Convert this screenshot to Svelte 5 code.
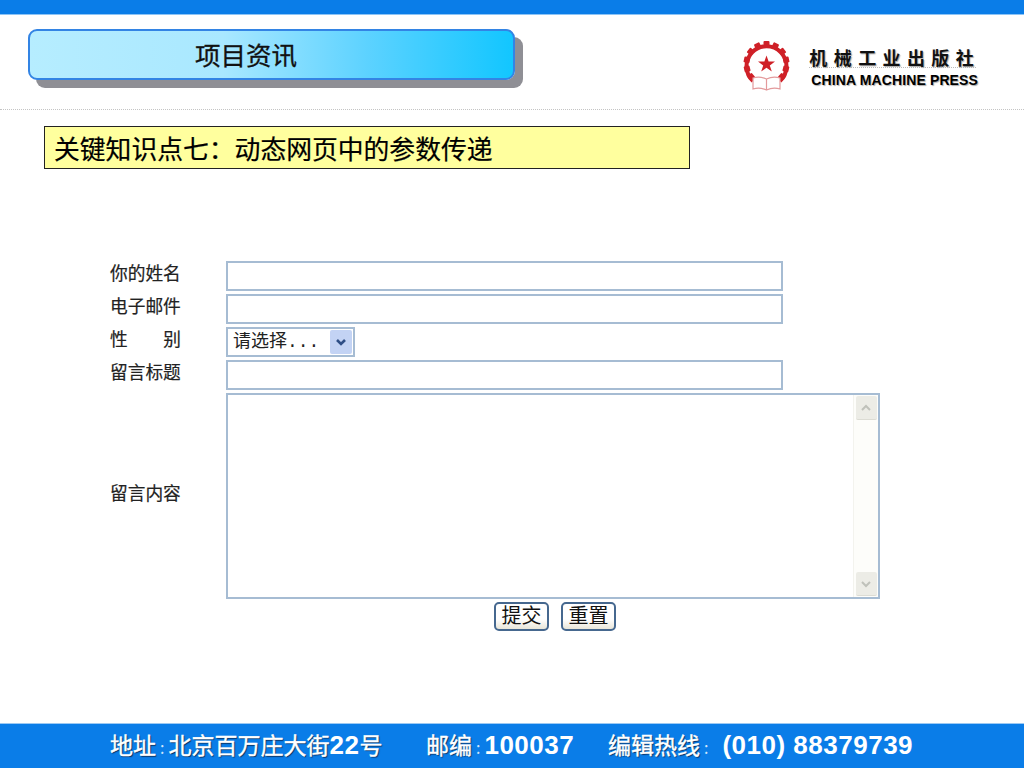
<script>
  const labels = { name: '你的姓名', mail: '电子邮件', sex: '留言标题', body: '留言内容' };
  // teeth of the logo gear, open at the bottom where the book sits
  const teeth = [];
  for (let a = -130; a <= 130; a += 26) teeth.push(a);
</script>

<div class="page">
  <div class="topbar"></div>

  <header class="header">
    <div class="title">项目资讯</div>
    <div class="logo">
      <svg width="50" height="52" viewBox="0 0 50 52" aria-hidden="true">
        <g fill="#cf2027">
          {#each teeth as a}
            <rect x="21.5" y="1" width="6" height="6" rx="1" transform="rotate({a} 24.5 24)" />
          {/each}
        </g>
        <path d="M11 41 A20 20 0 1 1 38 41" fill="none" stroke="#cf2027" stroke-width="4" />
        <polygon points="24.5,15.5 26.6,21.6 33,21.6 27.8,25.4 29.8,31.5 24.5,27.8 19.2,31.5 21.2,25.4 16,21.6 22.4,21.6" fill="#cf2027" />
        <path d="M11 38 Q18 36 24.5 39 Q31 36 38 38 V49 Q31 47 24.5 50 Q18 47 11 49 Z M24.5 39 V50" fill="#fff" stroke="#e39a9c" stroke-width="1.2" />
      </svg>
      <div class="press">
        <div class="press-cn">机械工业出版社</div>
        <div class="press-en">CHINA MACHINE PRESS</div>
      </div>
    </div>
  </header>

  <main class="main">
    <h1 class="point">关键知识点七：动态网页中的参数传递</h1>

    <form class="form">
      <label class="label" for="f-name">{labels.name}</label>
      <input id="f-name" class="field" type="text" />

      <label class="label" for="f-mail">{labels.mail}</label>
      <input id="f-mail" class="field" type="text" />

      <label class="label spread" for="f-sex"><span>性</span><span>别</span></label>
      <div class="select-wrap">
        <select id="f-sex" class="select">
          <option>请选择...</option>
        </select>
        <span class="select-btn">
          <svg width="12" height="8" viewBox="0 0 12 8" aria-hidden="true">
            <path d="M2 2 L6 6 L10 2" fill="none" stroke="#2f4f86" stroke-width="2.6" />
          </svg>
        </span>
      </div>

      <label class="label" for="f-subject">{labels.sex}</label>
      <input id="f-subject" class="field" type="text" />

      <label class="label body-label" for="f-body">{labels.body}</label>
      <div class="area-wrap">
        <textarea id="f-body" class="area"></textarea>
        <div class="scroll">
          <span class="scroll-btn">
            <svg width="12" height="8" viewBox="0 0 12 8" aria-hidden="true">
              <path d="M2 6 L6 2 L10 6" fill="none" stroke="#bfc1ba" stroke-width="2" />
            </svg>
          </span>
          <span class="scroll-btn">
            <svg width="12" height="8" viewBox="0 0 12 8" aria-hidden="true">
              <path d="M2 2 L6 6 L10 2" fill="none" stroke="#bfc1ba" stroke-width="2" />
            </svg>
          </span>
        </div>
      </div>

      <div class="buttons">
        <button class="btn" type="submit">提交</button>
        <button class="btn" type="reset">重置</button>
      </div>
    </form>
  </main>

  <footer class="footer">
    <span class="addr">地址<i>:</i>北京百万庄大街<b>22</b>号</span>
    <span class="zip">邮编<i>:</i><b>100037</b></span>
    <span class="tel">编辑热线<i>:</i><b class="phone">(010) 88379739</b></span>
  </footer>
</div>

<style>
  :global(body) {
    background: #fff;
    font-family: "Noto Sans CJK SC", "Liberation Sans", sans-serif;
  }

  .page {
    width: 1024px;
    height: 768px;
    display: flex;
    flex-direction: column;
    overflow: hidden;
    color: #000;
  }

  .topbar {
    height: 15px;
    background: #0a7de8;
    border-bottom: 1px solid #8cc4f6;
    box-sizing: border-box;
  }

  .header {
    height: 95px;
    box-sizing: border-box;
    display: flex;
    justify-content: space-between;
    padding: 14px 46px 0 28px;
    border-bottom: 1px dotted #c4c4c4;
  }

  .title {
    width: 487px;
    height: 51px;
    box-sizing: border-box;
    border: 2px solid #3384e4;
    border-radius: 9px;
    background: linear-gradient(90deg, #b6edff 0%, #a9e8ff 40%, #5cd2ff 70%, #12c6ff 100%);
    box-shadow: 8px 8px 0 #8f8f95;
    display: flex;
    align-items: center;
    justify-content: center;
    font-size: 25.5px;
    line-height: 1;
    color: #111;
    padding: 0 51px 2px 0;
    -webkit-text-stroke: 0.3px #111;
  }

  .logo {
    display: flex;
    gap: 17px;
    margin-top: 11px;
    height: 52px;
    align-items: flex-start;
  }

  .press {
    padding-top: 7px;
  }

  .press-cn {
    font-size: 18px;
    line-height: 20px;
    font-weight: 700;
    letter-spacing: 6.4px;
    color: #111;
    text-shadow: 1px 1px 1px #aaa;
    border-bottom: 1px dotted #bbb;
    width: 167px;
    white-space: nowrap;
  }

  .press-en {
    font-family: "Liberation Sans", sans-serif;
    font-size: 14px;
    line-height: 18px;
    font-weight: 700;
    letter-spacing: 0.12px;
    margin: 3px 0 0 2px;
    color: #000;
    text-shadow: 1px 1px 1px #aaa;
    white-space: nowrap;
  }

  .main {
    flex: 1;
    padding: 16px 0 0 44px;
  }

  .point {
    width: 646px;
    height: 43px;
    box-sizing: border-box;
    margin: 0;
    border: 1px solid #222;
    background: #ffff9e;
    display: flex;
    align-items: center;
    padding: 0 0 0 9px;
    font-size: 25.8px;
    font-weight: 400;
    line-height: 1;
    -webkit-text-stroke: 0.2px #000;
  }

  .form {
    display: grid;
    grid-template-columns: 116px 654px;
    row-gap: 3px;
    margin: 92px 0 0 66px;
  }

  .label {
    font-size: 17.7px;
    line-height: 22px;
    color: #222;
    width: 71px;
    align-self: start;
    -webkit-text-stroke: 0.2px #222;
  }

  .spread {
    display: flex;
    justify-content: space-between;
  }

  .body-label {
    align-self: center;
    margin-bottom: 9px;
  }

  .field {
    width: 557px;
    height: 30px;
    box-sizing: border-box;
    margin: 0;
    border: 2px solid #a6bcd3;
    background: #fff;
    outline: none;
    padding: 0;
  }

  .select-wrap {
    position: relative;
    width: 129px;
    height: 30px;
  }

  .select {
    display: block;
    width: 100%;
    height: 100%;
    box-sizing: border-box;
    appearance: none;
    border: 2px solid #a6bcd3;
    border-radius: 0;
    background: #fff;
    padding: 0 0 1px 5px;
    font-family: "Liberation Mono", "Noto Sans CJK SC", monospace;
    font-size: 18px;
    color: #222;
  }

  .select-btn {
    position: absolute;
    right: 3px;
    top: 3px;
    width: 22px;
    height: 24px;
    border-radius: 2px;
    background: #c3d3f4;
    display: flex;
    align-items: center;
    justify-content: center;
  }

  .area-wrap {
    position: relative;
    width: 654px;
    height: 206px;
  }

  .area {
    display: block;
    width: 100%;
    height: 100%;
    box-sizing: border-box;
    margin: 0;
    border: 2px solid #a6bcd3;
    outline: none;
    resize: none;
    overflow: hidden;
    background: #fff;
  }

  .scroll {
    position: absolute;
    top: 2px;
    right: 2px;
    bottom: 2px;
    width: 25px;
    box-sizing: border-box;
    background: #fdfdfa;
    border-left: 1px solid #f3f3ee;
    display: flex;
    flex-direction: column;
    justify-content: space-between;
    align-items: center;
    padding: 1px 0;
  }

  .scroll-btn {
    width: 21px;
    height: 24px;
    border-radius: 2px;
    background: #ecece6;
    border-bottom: 1px solid #dcdcd4;
    box-sizing: border-box;
    display: flex;
    align-items: center;
    justify-content: center;
  }

  .buttons {
    grid-column: 2;
    display: flex;
    gap: 12px;
    padding-left: 268px;
  }

  .btn {
    width: 55px;
    height: 29px;
    box-sizing: border-box;
    padding: 0 0 4px;
    border: 2px solid #46688f;
    border-radius: 5px;
    background: linear-gradient(#fff 60%, #e8e5d8);
    font-family: "Noto Sans CJK SC", sans-serif;
    font-size: 20px;
    line-height: 1;
    color: #111;
  }

  .footer {
    height: 45px;
    box-sizing: border-box;
    background: #0a7de8;
    border-top: 1px solid #9cc9f3;
    display: flex;
    align-items: center;
    padding: 0 0 3px 110px;
    font-size: 23px;
    line-height: 1;
    color: #fff;
    white-space: nowrap;
    text-shadow: 1px 1px 1px #0b2f5e;
    -webkit-text-stroke: 0.4px #fff;
  }

  .footer i {
    font-style: normal;
    font-size: 16px;
    color: #cfe6fb;
    text-shadow: none;
    -webkit-text-stroke: 0;
    margin: 0 4px;
  }

  .footer b {
    font-family: "Liberation Sans", sans-serif;
    font-size: 26px;
    font-weight: 700;
    letter-spacing: 0.5px;
    text-shadow: none;
    -webkit-text-stroke: 0;
  }

  .footer .phone {
    margin-left: 10px;
  }

  .addr {
    width: 316px;
  }

  .zip {
    width: 182px;
  }
</style>
